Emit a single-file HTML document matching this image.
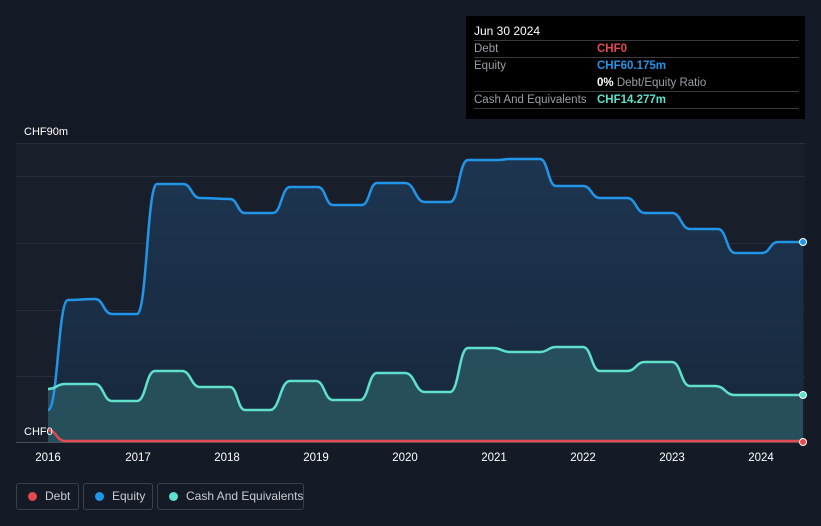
<!DOCTYPE html>
<html><head><style>
body{margin:0;background:#151b26;font-family:"Liberation Sans",sans-serif;}
.wrap{position:relative;width:821px;height:526px;overflow:hidden;background:#151b26}
.tip{position:absolute;left:466px;top:16px;width:339px;height:103px;background:#000;color:#fff;font-size:11.5px}
.tip .r{position:absolute;left:8px;right:6px;border-top:1px solid #3a3a3a;height:17px;line-height:17px}
.lab{color:#9a9ea6}
.leg{position:absolute;top:483px;height:27px;border:1px solid #3a404c;border-radius:3px;color:#c8ccd2;font-size:12px;line-height:25px;box-sizing:border-box;white-space:nowrap}
.dot{display:inline-block;width:9px;height:9px;border-radius:50%;margin:0 8px 0 11px;vertical-align:-1px}
</style></head><body><div class="wrap">
<svg width="821" height="526" style="position:absolute;left:0;top:0">
<defs><linearGradient id="eg" x1="0" y1="0" x2="0" y2="1"><stop offset="0" stop-color="#1d3550"/><stop offset="1" stop-color="#17283c"/></linearGradient></defs>
<rect x="16" y="143" width="789" height="299" fill="#181f2b"/>
<g stroke="#262e3b" stroke-width="1">
<line x1="16" y1="143.5" x2="805" y2="143.5"/><line x1="16" y1="176.5" x2="805" y2="176.5"/><line x1="16" y1="243.5" x2="805" y2="243.5"/><line x1="16" y1="310.5" x2="805" y2="310.5"/><line x1="16" y1="376.5" x2="805" y2="376.5"/></g>
<path id="ef" fill="url(#eg)"/>
<path id="cf" fill="#2a5560" fill-opacity="0.85"/>
<line x1="16" y1="442.5" x2="805" y2="442.5" stroke="#4a505c"/>
<path id="el" fill="none" stroke="#2196e8" stroke-width="2.5"/>
<path id="cl" fill="none" stroke="#5ee0cc" stroke-width="2.5"/>
<path id="dl" fill="none" stroke="#e04a50" stroke-width="2.5"/>
<circle cx="803" cy="242" r="3.5" fill="#2196e8" stroke="#fff" stroke-width="1"/>
<circle cx="803" cy="395" r="3.5" fill="#5ee0cc" stroke="#fff" stroke-width="1"/>
<circle cx="803" cy="442" r="3.5" fill="#e04a50" stroke="#fff" stroke-width="1"/>
<g fill="#fff" font-size="11" font-family="Liberation Sans">
<text x="24" y="135">CHF90m</text><text x="24" y="435">CHF0</text>
<g text-anchor="middle" font-size="11.5"><text x="48" y="461">2016</text><text x="138" y="461">2017</text><text x="227" y="461">2018</text><text x="316" y="461">2019</text><text x="405" y="461">2020</text><text x="494" y="461">2021</text><text x="583" y="461">2022</text><text x="672" y="461">2023</text><text x="761" y="461">2024</text></g></g>
</svg>
<script>
function P(a){var d="M"+a[0]+","+a[1];for(var i=2;i<a.length;i+=2){var x0=a[i-2],y0=a[i-1],x=a[i],y=a[i+1],m=(x0+x)/2;d+=" C"+m+","+y0+" "+m+","+y+" "+x+","+y;}return d;}
var E=[48,410,68,300,95,299,112,314,137,314,157,184,183,184,200,198,230,199,245,213,273,213,290,187,318,187,333,205,362,205,377,183,405,183,425,202,450,202,468,160,498,160,510,159,540,159,556,186,583,186,600,198,627,198,645,213,672,213,690,229,718,229,735,253,762,253,778,242,803,242];
var C=[48,389,65,384,95,384,112,401,137,401,155,371,182,371,200,387,230,387,245,410,270,410,290,381,316,381,333,400,360,400,377,373,405,373,425,392,450,392,468,348,493,348,510,352,540,352,556,347,583,347,600,371,627,371,645,362,672,362,690,386,715,386,735,395,762,395,803,395];
var D=[48,430,65,441,803,441];
var e=P(E),c=P(C);
document.getElementById("el").setAttribute("d",e);
document.getElementById("cl").setAttribute("d",c);
document.getElementById("dl").setAttribute("d",P(D));
document.getElementById("ef").setAttribute("d",e+" L803,442 L48,442Z");
document.getElementById("cf").setAttribute("d",c+" L803,442 L48,442Z");
</script>
<div class="tip">
<div style="position:absolute;left:8px;top:8px;font-size:12px">Jun 30 2024</div>
<div class="r" style="top:24px"><span class="lab">Debt</span><span style="position:absolute;left:123px;color:#e5484d;font-weight:bold">CHF0</span></div>
<div class="r" style="top:41px"><span class="lab">Equity</span><span style="position:absolute;left:123px;color:#2196e8;font-weight:bold">CHF60.175m</span></div>
<div style="position:absolute;left:131px;top:59px;line-height:17px"><b>0%</b> <span class="lab">Debt/Equity Ratio</span></div>
<div class="r" style="top:75px"><span class="lab">Cash And Equivalents</span><span style="position:absolute;left:123px;color:#5ee0cc;font-weight:bold">CHF14.277m</span></div>
<div class="r" style="top:92px"></div>
</div>
<div class="leg" style="left:16px;width:63px"><span class="dot" style="background:#e5484d"></span>Debt</div>
<div class="leg" style="left:83px;width:70px"><span class="dot" style="background:#2196e8"></span>Equity</div>
<div class="leg" style="left:157px;width:147px"><span class="dot" style="background:#5ee0cc"></span>Cash And Equivalents</div>
</div></body></html>
